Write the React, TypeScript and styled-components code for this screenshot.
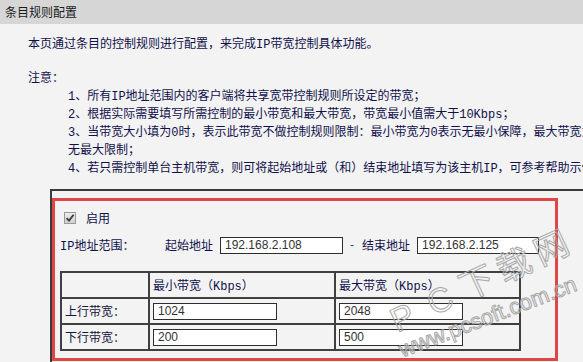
import React from "react";
import styled, { createGlobalStyle } from "styled-components";

const Global = createGlobalStyle`
  html, body { margin: 0; padding: 0; background: #f3f3f3; overflow: hidden; }
  * { box-sizing: border-box; }
`;

const TEXT = "#10104a";
const FONT = `"Liberation Mono", "Noto Sans CJK SC", sans-serif`;

const Page = styled.div`
  position: relative;
  width: 583px;
  height: 362px;
  overflow: hidden;
  background: #f3f3f3;
  font-family: ${FONT};
  font-size: 12px;
  color: ${TEXT};
`;

const TitleBar = styled.div`
  height: 24px;
  line-height: 24px;
  padding-left: 5px;
  background: #d6d6d6;
  color: #1a1a1a;
  font-family: "Noto Sans CJK SC", sans-serif;
  font-size: 12px;
`;

const Content = styled.div`
  padding-left: 28px;
`;

const Line = styled.div<{ $mt?: number }>`
  height: 18px;
  line-height: 18px;
  white-space: nowrap;
  margin-top: ${(p) => p.$mt ?? 0}px;
`;

const NoteList = styled.div`
  padding-left: 40px;
`;

const Frame = styled.div`
  margin-top: 11px;
  margin-left: 22px;
  width: 640px;
  height: 200px;
  border-top: 2px solid #3a3a3a;
  border-left: 2px solid #3a3a3a;
  padding: 18px 0 0 8px;
`;

const CheckRow = styled.div`
  display: flex;
  align-items: center;
  height: 18px;
  padding-left: 4px;
  gap: 10px;
`;

const Check = styled.span`
  display: inline-flex;
  width: 12px;
  height: 12px;
  border: 1px solid #9a9a9a;
  background: linear-gradient(#ececec, #cfcfcf);
  align-items: center;
  justify-content: center;
`;

const IpRow = styled.div`
  display: flex;
  align-items: center;
  height: 18px;
  margin-top: 9px;
  white-space: nowrap;
`;

const IpLabel = styled.span`
  width: 105px;
`;

const FieldLabel = styled.span`
  margin-right: 7px;
`;

const Dash = styled.span`
  color: #444;
  margin: 0 8px 0 7px;
  font-family: "Liberation Sans", sans-serif;
`;

const TextInput = styled.input<{ $w?: number }>`
  width: ${(p) => p.$w ?? 124}px;
  height: 17px;
  border: 1px solid #2e2e2e;
  background: #fff;
  padding: 0 0 0 4px;
  margin: 0;
  font-family: "Liberation Sans", Arial, sans-serif;
  font-size: 12px;
  color: #333;
  outline: none;
`;

const Grid = styled.div`
  margin-top: 17px;
  display: grid;
  grid-template-columns: 86px 184px 183px;
  grid-auto-rows: 24px;
  gap: 2px;
  padding: 2px;
  background: #404040;
  width: 461px;
`;

const Cell = styled.div`
  background: #f3f3f3;
  display: flex;
  align-items: center;
  padding-left: 3px;
  white-space: nowrap;
`;

const RowLabel = styled(Cell)`
  color: #15153a;
`;

const Annotation = styled.div`
  position: absolute;
  left: 52px;
  top: 198px;
  width: 506px;
  height: 163px;
  border: 3px solid #e04646;
  pointer-events: none;
`;

const Watermark = styled.div<{ $size: number; $angle: number }>`
  position: absolute;
  white-space: nowrap;
  line-height: 1;
  font-family: "Liberation Sans", "Noto Sans CJK SC", sans-serif;
  font-size: ${(p) => p.$size}px;
  color: transparent;
  -webkit-text-stroke: 1px #a8a8a8;
  transform: rotate(${(p) => p.$angle}deg);
  transform-origin: left center;
  pointer-events: none;
`;

const WmChar = styled.span`
  display: inline-block;
  width: 41px;
  text-align: center;
`;

export default function App() {
  return (
    <Page>
      <Global />
      <TitleBar>条目规则配置</TitleBar>
      <Content>
        <Line $mt={12}>本页通过条目的控制规则进行配置，来完成IP带宽控制具体功能。</Line>
        <Line $mt={16}>注意：</Line>
        <NoteList>
          <Line>1、所有IP地址范围内的客户端将共享宽带控制规则所设定的带宽；</Line>
          <Line>2、根据实际需要填写所需控制的最小带宽和最大带宽，带宽最小值需大于10Kbps；</Line>
          <Line>3、当带宽大小填为0时，表示此带宽不做控制规则限制：最小带宽为0表示无最小保障，最大带宽为0表示</Line>
          <Line>无最大限制；</Line>
          <Line>4、若只需控制单台主机带宽，则可将起始地址或（和）结束地址填写为该主机IP，可参考帮助示例。</Line>
        </NoteList>
        <Frame>
          <CheckRow>
            <Check>
              <svg width="10" height="10" viewBox="0 0 10 10">
                <path d="M1.5 5.2 L4 7.6 L8.6 1.8" fill="none" stroke="#3a3a3a" strokeWidth="1.8" />
              </svg>
            </Check>
            <span>启用</span>
          </CheckRow>
          <IpRow>
            <IpLabel>IP地址范围：</IpLabel>
            <FieldLabel>起始地址</FieldLabel>
            <TextInput $w={123} defaultValue="192.168.2.108" />
            <Dash>-</Dash>
            <FieldLabel>结束地址</FieldLabel>
            <TextInput $w={122} defaultValue="192.168.2.125" />
          </IpRow>
          <Grid>
            <Cell />
            <Cell>最小带宽（Kbps）</Cell>
            <Cell>最大带宽（Kbps）</Cell>
            <RowLabel>上行带宽：</RowLabel>
            <Cell><TextInput defaultValue="1024" /></Cell>
            <Cell><TextInput defaultValue="2048" /></Cell>
            <RowLabel>下行带宽：</RowLabel>
            <Cell><TextInput defaultValue="200" /></Cell>
            <Cell><TextInput defaultValue="500" /></Cell>
          </Grid>
        </Frame>
      </Content>
      <Annotation />
      <Watermark $size={34} $angle={-25} style={{ left: 384, top: 309 }}>
        <WmChar>P</WmChar>
        <WmChar>C</WmChar>
        <WmChar>下</WmChar>
        <WmChar>载</WmChar>
        <WmChar>网</WmChar>
      </Watermark>
      <Watermark $size={22} $angle={-21} style={{ left: 400, top: 340 }}>
        www.pcsoft.com.cn
      </Watermark>
    </Page>
  );
}
